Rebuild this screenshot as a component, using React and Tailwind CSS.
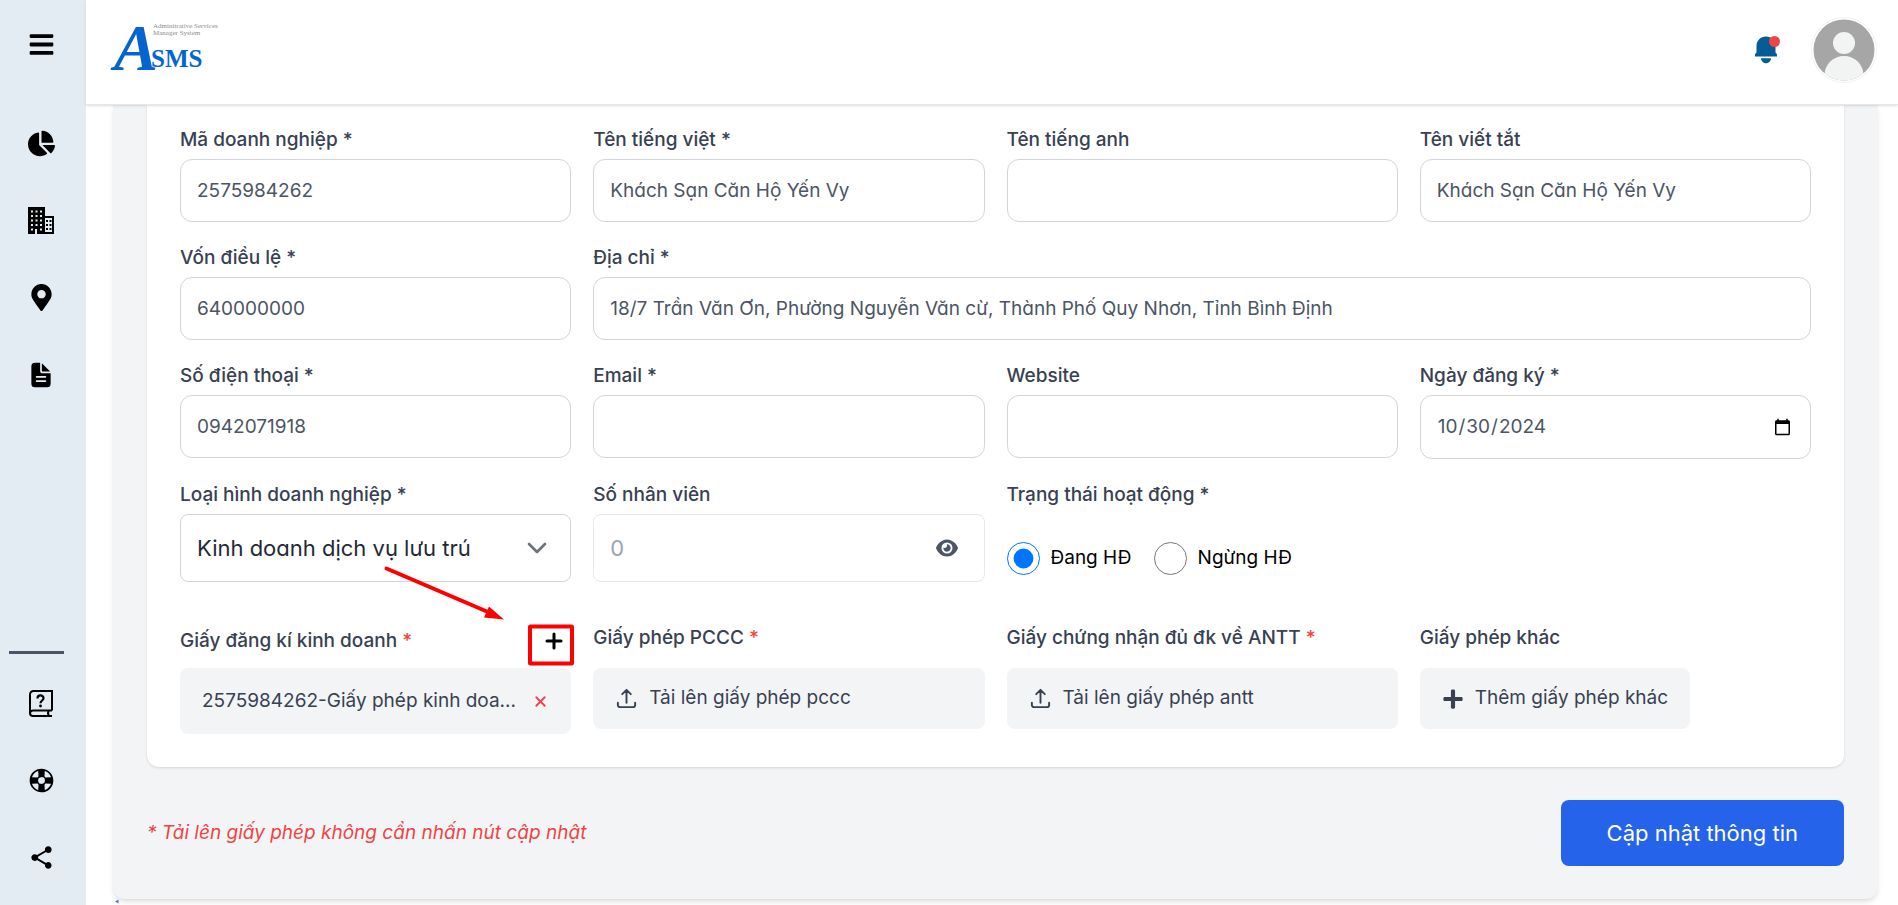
import { FaBars, FaChartPie, FaMapMarkerAlt, FaPlus } from 'react-icons/fa';
import { FaEye } from 'react-icons/fa6';
import { IoDocumentText, IoHelpBuoy } from 'react-icons/io5';
import { MdShare } from 'react-icons/md';
import { HiOutlineArrowUpTray } from 'react-icons/hi2';
import { ChevronDown, Plus, X } from 'lucide-react';

function Buildings() {
  return (
    <svg width="26" height="27" viewBox="0 0 26 27" fill="currentColor">
      <path
        fillRule="evenodd"
        d="M0 0h17v9h9v18H9v-5H7v5H0zM3 3.500v2h2v-2zM7.500 3.500v2h2v-2zM12 3.500v2h2v-2zM3 8v2h2V8zM7.500 8v2h2V8zM12 8v2h2V8zM3 12.500v2h2v-2zM7.500 12.500v2h2v-2zM12 12.500v2h2v-2zM3 17v2h2v-2zM7.500 17v2h2v-2zM12 17v2h2v-2zM3 21.500v2h2v-2zM12 21.500v2h2v-2zM17 11v14h7V11z"
      />
      <path d="M18 13h2v2h-2zM21.500 13h2v2h-2zM18 17h2v2h-2zM21.500 17h2v2h-2zM18 21h2v2h-2zM21.500 21h2v2h-2z" />
    </svg>
  );
}

function HelpBook() {
  return (
    <svg width="24" height="27" viewBox="0 0 24 27" fill="none" stroke="currentColor" strokeWidth="2">
      <path d="M23 20.500V1H4.500A3.500 3.500 0 0 0 1 4.500V23a3 3 0 0 0 3 3h19" />
      <path d="M1 23.500a3 3 0 0 1 3-3h19M20 20.500c-1.500 2-1.500 3.500 0 5.500" />
      <path d="M8.500 8.500c0-4 6-4 6-.3 0 2.300-3 2.300-3 5" strokeWidth="2.200" />
      <circle cx="11.500" cy="16" r="1.400" fill="currentColor" stroke="none" />
    </svg>
  );
}

function Bell() {
  return (
    <svg width="24" height="28" viewBox="0 0 24 28" fill="#045c94">
      <path d="M12 0.500C6.500.500 2.500 4.700 2.500 10v6.500L1 18.300v2.200h22v-2.200l-1.500-1.800V10C21.500 4.700 17.500.500 12 .500z" />
      <path d="M7 22.300h10c0 2.800-2.300 5-5 5s-5-2.200-5-5z" />
    </svg>
  );
}

function Avatar() {
  return (
    <svg width="66" height="66" viewBox="0 0 66 66">
      <defs>
        <clipPath id="disc"><circle cx="33" cy="33" r="30.500" /></clipPath>
      </defs>
      <circle cx="33" cy="33" r="32.500" fill="#fff" stroke="#f0f1f2" />
      <g clipPath="url(#disc)">
        <rect width="66" height="66" fill="#a6a6a6" />
        <circle cx="33" cy="26" r="11" fill="#f2f4f4" />
        <ellipse cx="33" cy="58" rx="19.500" ry="19" fill="#f2f4f4" />
      </g>
    </svg>
  );
}

function Logo() {
  return (
    <a href="#home" aria-label="ASMS">
      <svg width="110" height="62" viewBox="0 0 110 62" className="overflow-visible">
        <text x="4" y="56" fill="#0465d0" className="font-['Liberation_Serif',serif] text-[66px] font-bold italic">A</text>
        <text x="41" y="53" fill="#0465d0" className="font-['Liberation_Serif',serif] text-[25px] font-bold">SMS</text>
        <text x="43" y="14" fill="#8d8d8d" className="font-['Liberation_Serif',serif] text-[7px]">Adminitrative Services</text>
        <text x="43" y="21" fill="#8d8d8d" className="font-['Liberation_Serif',serif] text-[7px]">Manager System</text>
      </svg>
    </a>
  );
}

function NavItem({ label, children }) {
  return (
    <a href="#section" aria-label={label} className="flex h-[77px] items-center justify-center">
      {children}
    </a>
  );
}

function Sidebar() {
  return (
    <nav className="flex w-[86px] shrink-0 flex-col bg-[#e4ecf3] pr-1 pb-[9px] text-black">
      <button type="button" aria-label="Menu" className="mb-4 flex h-[89px] items-center justify-center">
        <FaBars size={27} />
      </button>
      <NavItem label="Thống kê"><FaChartPie size={27} /></NavItem>
      <NavItem label="Doanh nghiệp"><Buildings /></NavItem>
      <NavItem label="Địa điểm"><FaMapMarkerAlt size={27} /></NavItem>
      <NavItem label="Tài liệu"><IoDocumentText size={28} /></NavItem>
      <div className="mt-auto mr-[18px] mb-[11px] ml-[9px] h-[3px] bg-[#4a5568]" />
      <NavItem label="Hướng dẫn"><HelpBook /></NavItem>
      <NavItem label="Hỗ trợ"><IoHelpBuoy size={27} /></NavItem>
      <NavItem label="Chia sẻ"><MdShare size={27} /></NavItem>
    </nav>
  );
}

const labelClass = 'mb-[5px] block text-[19px] leading-7 font-medium text-[#374151]';
const inputClass =
  "block w-full rounded-xl border border-[#d1d5db] bg-white px-4 text-[19px] text-[#4b5563] [font-feature-settings:'cv11']";

function Field({ id, label, value = '', type = 'text', wide = false }) {
  return (
    <div className={wide ? 'col-span-3' : ''}>
      <label htmlFor={id} className={labelClass}>{label}</label>
      <input id={id} type={type} defaultValue={value} className={`${inputClass} ${type === 'date' ? 'h-16' : 'h-[63px]'}`} />
    </div>
  );
}

function Star() {
  return <span className="text-[#ef4444]">*</span>;
}

const docTitle = 'text-[19px] leading-7 font-medium text-[#374151]';
const docBox = 'flex items-center gap-[11px] rounded-lg bg-[#f3f4f6] px-[22px] text-[19px] text-[#374151]';

function Upload({ title, text }) {
  return (
    <div>
      <h3 className={`${docTitle} mb-4`}>{title} <Star /></h3>
      <button type="button" className={`${docBox} h-[61px] w-full`}>
        <HiOutlineArrowUpTray size={23} strokeWidth={2} />
        {text}
      </button>
    </div>
  );
}

function Annotation() {
  return (
    <svg className="pointer-events-none absolute -top-[61px] -right-[5px]" width="196" height="104" viewBox="0 0 196 104">
      <path d="M6.500 5.500L108 49" stroke="#f00" strokeWidth="4" strokeLinecap="round" />
      <path d="M109 43.500L124 56.500L104 54.500z" fill="#f00" />
      <rect x="150" y="63.500" width="42" height="37" rx="0.500" fill="none" stroke="#f00" strokeWidth="4" />
    </svg>
  );
}

export default function App() {
  return (
    <div className="flex h-screen overflow-hidden bg-white font-['Inter','Noto_Sans',sans-serif]">
      <Sidebar />
      <div className="flex min-w-0 flex-1 flex-col">
        <header className="relative z-10 flex h-[105px] shrink-0 items-start justify-between border-b border-[#e5e7eb] bg-white pr-[21px] pl-6 shadow-sm">
          <div className="pt-[14px]"><Logo /></div>
          <div className="flex items-center gap-[33px] pt-[17px]">
            <button type="button" aria-label="Thông báo" className="relative">
              <Bell />
              <span className="absolute top-0 -right-0.5 size-[11px] rounded-full bg-[#ef4444]" />
            </button>
            <button type="button" aria-label="Tài khoản"><Avatar /></button>
          </div>
        </header>

        <main className="min-h-0 flex-1 overflow-hidden pr-5 pl-[27px]">
          <form className="rounded-b-xl bg-[#f3f4f6] px-[34px] pb-[33px] shadow-md">
            <section className="rounded-b-xl bg-white px-[33px] pt-[21px] pb-[33px] shadow-sm">
              <div className="grid grid-cols-4 gap-[22px]">
                <Field id="code" label="Mã doanh nghiệp *" value="2575984262" />
                <Field id="name-vi" label="Tên tiếng việt *" value="Khách Sạn Căn Hộ Yến Vy" />
                <Field id="name-en" label="Tên tiếng anh" />
                <Field id="name-short" label="Tên viết tắt" value="Khách Sạn Căn Hộ Yến Vy" />

                <Field id="capital" label="Vốn điều lệ *" value="640000000" />
                <Field id="address" label="Địa chỉ *" value="18/7 Trần Văn Ơn, Phường Nguyễn Văn cừ, Thành Phố Quy Nhơn, Tỉnh Bình Định" wide />

                <Field id="phone" label="Số điện thoại *" value="0942071918" />
                <Field id="email" label="Email *" type="email" />
                <Field id="website" label="Website" />
                <Field id="registered" label="Ngày đăng ký *" type="date" value="2024-10-30" />

                <div>
                  <label htmlFor="kind" className={labelClass}>Loại hình doanh nghiệp *</label>
                  <div className="relative">
                    <select id="kind" className="h-[68px] w-full appearance-none rounded-lg border border-[#d1d5db] bg-white px-4 text-[22px] text-[#1f2937] [font-feature-settings:'cv11']">
                      <option>Kinh doanh dịch vụ lưu trú</option>
                    </select>
                    <ChevronDown size={32} strokeWidth={2} className="pointer-events-none absolute top-[18px] right-[18px] text-[#6b7280]" />
                  </div>
                </div>
                <div>
                  <label htmlFor="staff" className={labelClass}>Số nhân viên</label>
                  <div className="flex h-[68px] items-center rounded-lg border border-[#e5e7eb] bg-white pr-[26px] pl-4">
                    <input id="staff" type="text" placeholder="0" className="min-w-0 flex-1 bg-transparent text-[22px] outline-none placeholder:text-[#9ca3af]" />
                    <button type="button" aria-label="Xem nhân viên" className="text-[#4b5563]"><FaEye size={22} /></button>
                  </div>
                </div>
                <fieldset>
                  <legend className={labelClass}>Trạng thái hoạt động *</legend>
                  <div className="flex items-center gap-[22px] pt-7 text-[19px] text-black">
                    <label className="flex items-center gap-[11px]">
                      <input type="radio" name="status" defaultChecked className="size-[33px]" />
                      Đang HĐ
                    </label>
                    <label className="flex items-center gap-[11px]">
                      <input type="radio" name="status" className="size-[33px]" />
                      Ngừng HĐ
                    </label>
                  </div>
                </fieldset>
              </div>

              <div className="mt-[42px] grid grid-cols-4 items-start gap-x-[22px]">
                <div className="relative">
                  <div className="mb-2.5 flex h-[34px] items-center justify-between pr-[5px]">
                    <h3 className={docTitle}>Giấy đăng kí kinh doanh <Star /></h3>
                    <button type="button" aria-label="Thêm giấy đăng kí" className="text-black"><Plus size={24} strokeWidth={3} /></button>
                  </div>
                  <div className={`${docBox} h-[66px] justify-between`}>
                    <span className="truncate">2575984262-Giấy phép kinh doa...</span>
                    <button type="button" aria-label="Xóa" className="shrink-0 text-[#ef4444]"><X size={17} strokeWidth={2.5} /></button>
                  </div>
                  <Annotation />
                </div>
                <Upload title="Giấy phép PCCC" text="Tải lên giấy phép pccc" />
                <Upload title="Giấy chứng nhận đủ đk về ANTT" text="Tải lên giấy phép antt" />
                <div>
                  <h3 className={`${docTitle} mb-4`}>Giấy phép khác</h3>
                  <button type="button" className={`${docBox} h-[61px]`}>
                    <FaPlus size={22} />
                    Thêm giấy phép khác
                  </button>
                </div>
              </div>
            </section>

            <div className="mt-[33px] flex items-center justify-between">
              <p className="text-[19px] text-[#ef4444] italic">* Tải lên giấy phép không cần nhấn nút cập nhật</p>
              <button type="submit" className="h-[66px] rounded-lg bg-[#2563eb] px-[46px] text-[22px] text-white">Cập nhật thông tin</button>
            </div>
          </form>
          <svg className="ml-0.5" width="4" height="5" viewBox="0 0 4 5" fill="#4b74f0"><path d="M0 2.500L3.500 0.500v4z" /></svg>
        </main>
      </div>
    </div>
  );
}
